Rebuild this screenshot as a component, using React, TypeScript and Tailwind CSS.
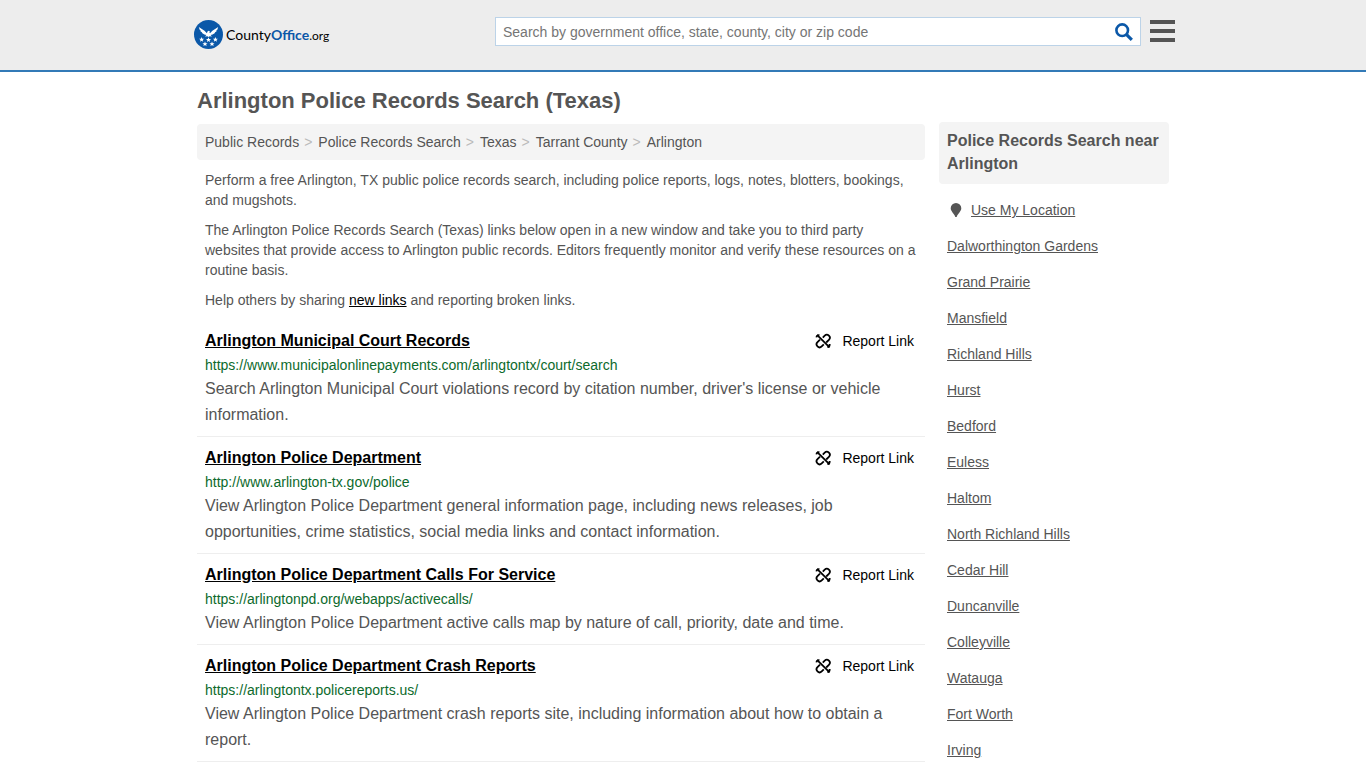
const crumbs = ["Public Records", "Police Records Search", "Texas", "Tarrant County", "Arlington"];

const records = [
    {
        title: "Arlington Municipal Court Records",
        url: "https://www.municipalonlinepayments.com/arlingtontx/court/search",
        text: "Search Arlington Municipal Court violations record by citation number, driver's license or vehicle information.",
    },
    {
        title: "Arlington Police Department",
        url: "http://www.arlington-tx.gov/police",
        text: "View Arlington Police Department general information page, including news releases, job opportunities, crime statistics, social media links and contact information.",
    },
    {
        title: "Arlington Police Department Calls For Service",
        url: "https://arlingtonpd.org/webapps/activecalls/",
        text: "View Arlington Police Department active calls map by nature of call, priority, date and time.",
    },
    {
        title: "Arlington Police Department Crash Reports",
        url: "https://arlingtontx.policereports.us/",
        text: "View Arlington Police Department crash reports site, including information about how to obtain a report.",
    },
];

const nearby = [
    "Dalworthington Gardens",
    "Grand Prairie",
    "Mansfield",
    "Richland Hills",
    "Hurst",
    "Bedford",
    "Euless",
    "Haltom",
    "North Richland Hills",
    "Cedar Hill",
    "Duncanville",
    "Colleyville",
    "Watauga",
    "Fort Worth",
    "Irving",
];

const starPoints = "0,-2.6 0.7,-0.8 2.5,-0.8 1.1,0.4 1.6,2.2 0,1.1 -1.6,2.2 -1.1,0.4 -2.5,-0.8 -0.7,-0.8";

function Logo() {
    return (
        <a href="#" className="flex items-center gap-[3px]" aria-label="CountyOffice.org">
            <svg className="size-[29px]" viewBox="0 0 29 29" aria-hidden="true">
                <circle cx="14.5" cy="14.5" r="14.5" fill="#0b58a8" />
                {/* eagle */}
                <path
                    fill="#fff"
                    d="M4.800 7L10.500 10.800 12.900 13.200 13.500 11.400 14.700 10.700 16 11.300 15.300 11.900 16 13.200 18.400 10.800 24.200 7 23.200 10 22.200 10.600 22.600 11.200 20.800 12.500 21 13.100 18.600 14.400 16.600 15 18 16.600 15.600 16.300 14.500 17.100 13.400 16.300 11 16.600 12.400 15 10.400 14.400 8 13.100 8.200 12.500 6.400 11.200 6.800 10.600 5.800 10z"
                />
                <g fill="#fff">
                    <polygon points={starPoints} transform="translate(7.600 19.600)" />
                    <polygon points={starPoints} transform="translate(14.500 19.800)" />
                    <polygon points={starPoints} transform="translate(21.400 19.600)" />
                    <polygon points={starPoints} transform="translate(11 24)" />
                    <polygon points={starPoints} transform="translate(18 24)" />
                </g>
            </svg>
            <span className="pt-px font-[Lato,sans-serif] text-sm text-black">
                County<b className="text-[#0b58a8]">Office</b>
                <span className="text-xs">.org</span>
            </span>
        </a>
    );
}

function Header() {
    return (
        <header className="h-[72px] border-b-2 border-[#337ab7] bg-[#ededed]">
            <div className="mx-auto flex max-w-[984px] items-start justify-between pl-[3px]">
                <div className="pt-5">
                    <Logo />
                </div>
                <div className="flex items-start gap-[9px] pt-[17px]">
                    <form className="flex h-[29px] w-[646px] items-center border border-[#bcd3e8] bg-white">
                        <input
                            type="text"
                            aria-label="Search"
                            placeholder="Search by government office, state, county, city or zip code"
                            className="min-w-0 flex-1 px-[7px] text-sm placeholder:text-[#757575] focus:outline-none"
                        />
                        <button type="button" aria-label="Submit search" className="px-[7px]">
                            <svg className="size-[18px]" viewBox="0 0 18 18" fill="none" stroke="#0b58a8">
                                <circle cx="7.200" cy="7.200" r="5.800" strokeWidth="2.600" />
                                <path d="M11.600 11.600l5.200 5.200" strokeWidth="3.200" />
                            </svg>
                        </button>
                    </form>
                    <button type="button" aria-label="Menu" className="flex flex-col gap-[5px] pt-[3px]">
                        <span className="h-1 w-[25px] bg-[#555]"></span>
                        <span className="h-1 w-[25px] bg-[#555]"></span>
                        <span className="h-1 w-[25px] bg-[#555]"></span>
                    </button>
                </div>
            </div>
        </header>
    );
}

function ReportLink() {
    return (
        <a href="#" className="flex shrink-0 items-center gap-[11px] text-sm text-black">
            <svg
                className="size-4"
                viewBox="0 0 16 16"
                fill="none"
                stroke="currentColor"
                strokeWidth="1.8"
                aria-hidden="true"
            >
                <path d="M2 1.800L14.600 14.400" />
                <path d="M7.800 4.600L9.700 2.700a2.900 2.900 0 0 1 4.200 4.200L11.200 9.500" />
                <path d="M5 6.700L2.500 9.200a2.900 2.900 0 0 0 4.200 4.200L8.800 11.400" />
                <path d="M1.400 4.400C1.600 3 2.800 1.900 4.400 2.200" />
                <path d="M14.700 11C14.800 12.600 13.900 13.900 12.400 14.100" />
            </svg>
            Report Link
        </a>
    );
}

export default function App() {
    return (
        <div className="min-h-screen bg-white font-['Liberation_Sans',Arial,sans-serif] text-sm text-[#555]">
            <Header />
            <div className="mx-auto max-w-[972px]">
                <h1 className="pt-[13px] text-[22px] leading-8 font-bold">Arlington Police Records Search (Texas)</h1>
                <div className="flex items-start gap-[14px] pt-[5px]">
                    <main className="min-w-0 flex-1 pt-[2px]">
                        <nav className="flex items-center rounded bg-[#f4f4f4] p-2" aria-label="Breadcrumb">
                            {crumbs.map((crumb, i) => (
                                <span key={crumb}>
                                    {i > 0 && <span className="pr-[6px] pl-[5px] text-[#bbb]">&gt;</span>}
                                    <a href="#">{crumb}</a>
                                </span>
                            ))}
                        </nav>
                        <div className="space-y-[10px] px-2 py-[10px]">
                            <p>
                                Perform a free Arlington, TX public police records search, including police reports, logs, notes,
                                blotters, bookings, and mugshots.
                            </p>
                            <p>
                                The Arlington Police Records Search (Texas) links below open in a new window and take you to third
                                party websites that provide access to Arlington public records. Editors frequently monitor and
                                verify these resources on a routine basis.
                            </p>
                            <p>
                                Help others by sharing{" "}
                                <a href="#" className="text-black underline">
                                    new links
                                </a>{" "}
                                and reporting broken links.
                            </p>
                        </div>
                        <ul>
                            {records.map((record) => (
                                <li key={record.title} className="border-b border-[#eee] px-2 pt-[9px] pb-2">
                                    <div className="flex items-center justify-between pr-[3px] pb-[2px]">
                                        <h2 className="text-base font-bold">
                                            <a href="#" className="text-black underline">
                                                {record.title}
                                            </a>
                                        </h2>
                                        <ReportLink />
                                    </div>
                                    <div className="pb-px text-[#0c6a2c]">{record.url}</div>
                                    <p className="text-base leading-[26px]">{record.text}</p>
                                </li>
                            ))}
                        </ul>
                    </main>
                    <aside className="w-[230px] shrink-0">
                        <h2 className="mb-2 rounded bg-[#f4f4f4] px-2 pt-[7px] pb-[9px] text-base leading-[23px] font-bold">
                            Police Records Search near Arlington
                        </h2>
                        <ul>
                            <li className="flex items-center gap-2 px-2 py-2">
                                <svg className="h-4 w-4" viewBox="0 0 16 16" fill="#555" aria-hidden="true">
                                    <path d="M9 1a5.300 5.300 0 0 1 5.300 5.300C14.300 9.500 10.500 12 9.700 15H8.300C7.500 12 3.700 9.500 3.700 6.300A5.300 5.300 0 0 1 9 1z" />
                                </svg>
                                <a href="#" className="underline">
                                    Use My Location
                                </a>
                            </li>
                            {nearby.map((city) => (
                                <li key={city} className="px-2 py-2">
                                    <a href="#" className="underline">
                                        {city}
                                    </a>
                                </li>
                            ))}
                        </ul>
                    </aside>
                </div>
            </div>
        </div>
    );
}
